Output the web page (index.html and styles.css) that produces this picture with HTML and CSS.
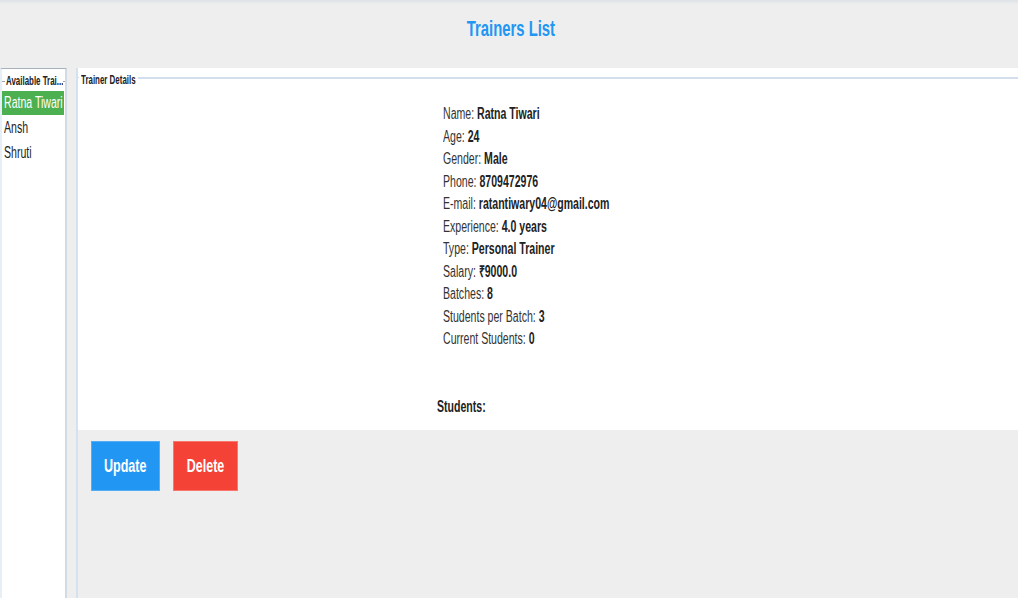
FILE: index.html
```html
<!DOCTYPE html>
<html lang="en">
<head>
<meta charset="utf-8">
<title>Trainers List</title>
<link rel="stylesheet" href="styles.css">
</head>
<body>
<div class="app">
  <header class="header">
    <h1 class="title"><span class="sq sq-c">Trainers List</span></h1>
  </header>
  <div class="content">
    <aside class="sidebar">
      <div class="legend-row side-legend">
        <span class="tick"></span>
        <span class="legend"><span class="sq">Available Trai...</span></span>
        <span class="tick tick-end"></span>
      </div>
      <ul class="list">
        <li class="item selected"><span class="sq">Ratna Tiwari</span></li>
        <li class="item"><span class="sq">Ansh</span></li>
        <li class="item"><span class="sq">Shruti</span></li>
      </ul>
    </aside>
    <div class="gutter"></div>
    <main class="main">
      <section class="card">
        <div class="legend-row main-legend">
          <span class="tick"></span>
          <span class="legend"><span class="sq">Trainer Details</span></span>
          <span class="rule"></span>
        </div>
        <div class="details">
          <div class="line"><span class="sq">Name: <b>Ratna Tiwari</b></span></div>
          <div class="line"><span class="sq">Age: <b>24</b></span></div>
          <div class="line"><span class="sq">Gender: <b>Male</b></span></div>
          <div class="line"><span class="sq">Phone: <b>8709472976</b></span></div>
          <div class="line"><span class="sq">E-mail: <b>ratantiwary04@gmail.com</b></span></div>
          <div class="line"><span class="sq">Experience: <b>4.0 years</b></span></div>
          <div class="line"><span class="sq">Type: <b>Personal Trainer</b></span></div>
          <div class="line"><span class="sq">Salary: <b>₹9000.0</b></span></div>
          <div class="line"><span class="sq">Batches: <b>8</b></span></div>
          <div class="line"><span class="sq">Students per Batch: <b>3</b></span></div>
          <div class="line"><span class="sq">Current Students: <b>0</b></span></div>
        </div>
        <div class="students"><span class="sq">Students:</span></div>
      </section>
      <section class="actions">
        <button class="btn btn-update"><span class="sq sq-c">Update</span></button>
        <button class="btn btn-delete"><span class="sq sq-c">Delete</span></button>
      </section>
    </main>
  </div>
</div>
</body>
</html>
```

FILE: styles.css
```css
html, body {
  margin: 0;
  padding: 0;
  width: 1018px;
  height: 598px;
  overflow: hidden;
  background: #eeeeee;
  font-family: "Liberation Sans", Arial, sans-serif;
  color: #2a2a2a;
}

.sq {
  display: inline-block;
  white-space: nowrap;
  transform: scaleX(0.66);
  transform-origin: 0 50%;
}

.sq-c {
  transform-origin: 50% 50%;
}

.app {
  display: flex;
  flex-direction: column;
  height: 598px;
}

.header {
  height: 68px;
  flex: 0 0 68px;
  display: flex;
  align-items: center;
  justify-content: center;
  background: linear-gradient(#dce2e7 0, #e9ebec 3px, #eeeeee 5px);
}

.title {
  margin: 0 0 10px 4px;
  font-size: 22.5px;
  font-weight: bold;
  color: #2196f3;
  line-height: 28px;
}

.content {
  flex: 1;
  display: flex;
  min-height: 0;
}

.sidebar {
  width: 63px;
  flex: 0 0 63px;
  background: #ffffff;
  border-left: 2px solid #e6eef6;
  border-right: 2px solid #d3dae1;
  border-top: 1px solid #a7b1bb;
  overflow: hidden;
  display: flex;
  flex-direction: column;
}

.legend-row {
  display: flex;
  align-items: center;
  height: 20px;
  padding-top: 2px;
}

.legend {
  font-size: 12px;
  font-weight: bold;
  line-height: 16px;
  color: #222;
  overflow: hidden;
  white-space: nowrap;
}

.tick {
  height: 1px;
  width: 3px;
  flex: 0 0 3px;
  background: #9aa4ae;
  margin-right: 1px;
}

.side-legend .legend {
  width: 57px;
  flex: 0 0 57px;
}

.tick-end {
  width: 2px;
  flex: 0 0 2px;
  margin: 0;
}

.list {
  list-style: none;
  margin: 0;
  padding: 0;
}

.item {
  height: 24px;
  margin: 0 1px 1px 0;
  font-size: 16px;
  line-height: 24px;
  color: #222;
  padding-left: 2px;
  white-space: nowrap;
  overflow: hidden;
}

.item.selected {
  background: #4caf50;
  color: #ffffff;
}

.gutter {
  width: 9px;
  flex: 0 0 9px;
  background: #eeeeee;
}

.main {
  flex: 1;
  display: flex;
  flex-direction: column;
  border-left: 2px solid #d4e2f0;
  min-width: 0;
}

.card {
  height: 362px;
  flex: 0 0 362px;
  background: #ffffff;
  display: flex;
  flex-direction: column;
}

.main-legend {
  align-items: flex-start;
  height: 18px;
  padding-top: 4px;
}

.main-legend .tick {
  margin-top: 5px;
  width: 1px;
  flex: 0 0 1px;
  background: #c9d6e4;
}

.main-legend .legend {
  width: 57px;
  flex: 0 0 57px;
  margin-left: 1px;
}

.rule {
  flex: 1;
  height: 2px;
  margin-top: 5px;
  background: #d3dfec;
}

.details {
  padding: 13px 0 0 365px;
  font-size: 16px;
  line-height: 22.5px;
  color: #333;
}

.details b {
  color: #222;
}

.students {
  margin-top: 45px;
  padding-left: 359px;
  font-size: 16px;
  line-height: 22px;
  font-weight: bold;
  color: #222;
}

.actions {
  flex: 1;
  display: flex;
  align-items: flex-start;
  gap: 13px;
  padding: 11px 0 0 13px;
  background: #eeeeee;
}

.btn {
  height: 50px;
  border: 1px solid transparent;
  padding: 0;
  font-family: "Liberation Sans", Arial, sans-serif;
  font-size: 19px;
  font-weight: bold;
  color: #ffffff;
  display: flex;
  align-items: center;
  justify-content: center;
  overflow: hidden;
}

.btn-update {
  width: 69px;
  background: #2196f3;
  border-color: #55adf5;
}

.btn-delete {
  width: 65px;
  background: #f44336;
  border-color: #f7776d;
}
```
